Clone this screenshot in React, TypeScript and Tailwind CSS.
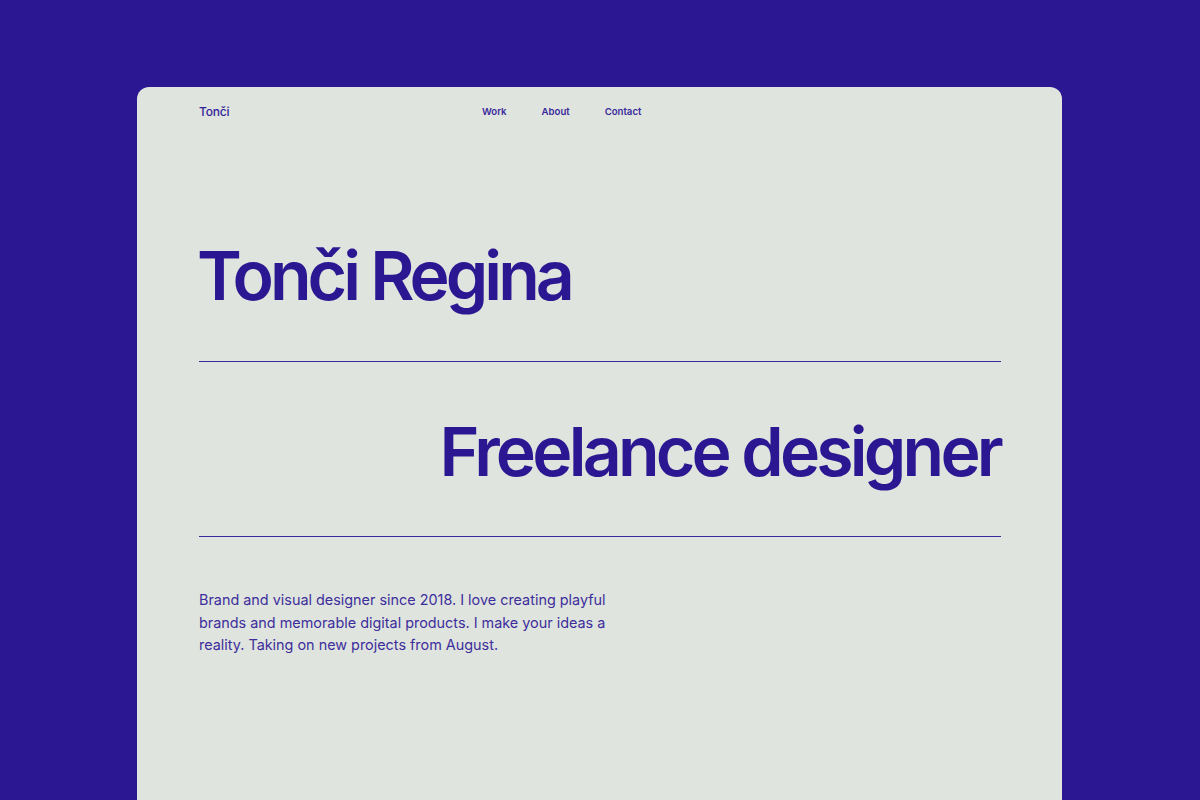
export default function App() {
  return (
    <div className="w-[1200px] h-[800px] bg-[#2b1791] overflow-hidden pt-[87px] pl-[137px]" style={{ fontFamily: 'Inter, "Noto Sans", sans-serif' }}>
      <div className="w-[925px] h-[800px] bg-[#dfe4de] rounded-[12px] px-[62px] text-[#2b1791]">
        <div className="flex items-center h-[48px] pt-[1px]">
          <div className="text-[12px] font-medium tracking-[-0.2px] w-[283px] text-[#33229a]">Tonči</div>
          <div className="flex gap-[35px] text-[9.6px] font-semibold text-[#3a2a9c] pt-[2px]">
            <span>Work</span>
            <span>About</span>
            <span>Contact</span>
          </div>
        </div>
        <h1 className="mt-[106px] text-[68px] leading-[1] font-semibold tracking-[-4px] ml-[-2px]">Tonči Regina</h1>
        <div className="mt-[52px] border-t border-[#3b2a9c] mr-[-1px]" />
        <h2 className="mt-[55px] text-[68px] leading-[1] font-semibold tracking-[-3.8px] text-right">Freelance designer</h2>
        <div className="mt-[51px] border-t border-[#3b2a9c] mr-[-1px]" />
        <p className="mt-[52px] w-[420px] text-[14.4px] leading-[22.5px] text-[#3d2e9c]">
          Brand and visual designer since 2018. I love creating playful brands and memorable digital products. I make your ideas a reality. Taking on new projects from August.
        </p>
      </div>
    </div>
  );
}
